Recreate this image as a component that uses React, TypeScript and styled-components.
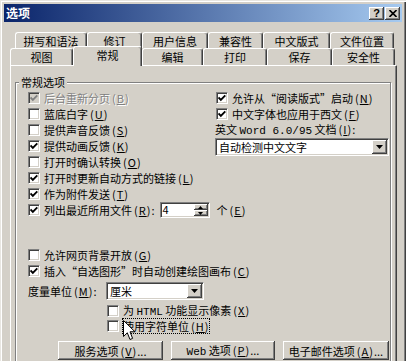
import React from 'react';
import styled, { createGlobalStyle, css } from 'styled-components';

const GlobalStyle = createGlobalStyle`
  html, body {
    margin: 0;
    padding: 0;
    background: #d4d0c8;
  }
  body {
    font-family: "Noto Sans CJK SC", "Liberation Sans", sans-serif;
    font-size: 11px;
    color: #000;
  }
`;

const raised = css`
  background: #d4d0c8;
  box-shadow: inset -1px -1px #404040, inset 1px 1px #fff, inset -2px -2px #808080;
`;

const sunken = css`
  border-top: 1px solid #808080;
  border-left: 1px solid #808080;
  border-right: 1px solid #fff;
  border-bottom: 1px solid #fff;
  box-shadow: inset 1px 1px #404040, inset -1px -1px #d4d0c8;
`;

const Window = styled.div`
  width: 406px;
  height: 361px;
  box-sizing: border-box;
  overflow: hidden;
  background: #d4d0c8;
  padding: 4px 4px 0;
  box-shadow: inset 1px 1px #e8e6e1, inset 2px 2px #fff, inset -1px 0 #404040, inset -2px 0 #808080;
`;

const TitleBar = styled.div`
  height: 18px;
  display: flex;
  align-items: center;
  justify-content: space-between;
  padding-left: 2px;
  background: linear-gradient(to right, #0a246a, #a6caf0);
`;

const TitleText = styled.span`
  color: #fff;
  font-weight: bold;
  font-size: 12px;
  line-height: 18px;
`;

const TitleButtons = styled.div`
  display: flex;
  gap: 1px;
  margin-right: 2px;
`;

const TitleButton = styled.div`
  ${raised};
  width: 15px;
  height: 13px;
  display: flex;
  align-items: center;
  justify-content: center;
  font-family: "Liberation Sans", sans-serif;
  font-weight: bold;
  font-size: 11px;
  line-height: 13px;
`;

const Body = styled.div`
  padding: 10px 5px 0 6px;
`;

const TabRow = styled.div<{ $indent?: number; $h: number }>`
  display: flex;
  height: ${(p) => p.$h}px;
  padding-left: ${(p) => p.$indent ?? 0}px;
`;

const Tab = styled.div<{ $w: number; $active?: boolean }>`
  box-sizing: border-box;
  width: ${(p) => p.$w}px;
  height: 100%;
  flex: none;
  display: flex;
  align-items: center;
  justify-content: center;
  background: #d4d0c8;
  border-top: 1px solid #fff;
  border-left: 1px solid #fff;
  border-right: 1px solid #404040;
  box-shadow: inset -1px 0 #808080;
  border-radius: 3px 3px 0 0;
  line-height: 14px;
  white-space: nowrap;
  ${(p) =>
    p.$active &&
    css`
      position: relative;
      z-index: 1;
      height: 20px;
      margin-top: -2px;
      padding-bottom: 3px;
    `}
`;

const Panel = styled.div`
  height: 330px;
  border-top: 1px solid #fff;
  border-left: 1px solid #fff;
  border-right: 1px solid #404040;
  box-shadow: inset -1px 0 #808080;
  padding: 8px 5px 0 4px;
`;

const Group = styled.fieldset`
  margin: 0;
  padding: 0 1px 0 12px;
  border: 1px solid #808080;
  box-shadow: inset 1px 1px #fff, 1px 1px #fff;
  min-height: 320px;
`;

const GroupLabel = styled.legend`
  padding: 0 2px;
  margin-left: -9px;
  line-height: 16px;
  background: #d4d0c8;
`;

const TopSection = styled.div`
  display: flex;
`;

const LeftCol = styled.div`
  width: 187px;
  flex: none;
`;

const RightCol = styled.div`
  flex: 1;
  min-width: 0;
`;

const BottomSection = styled.div`
  margin-top: 29px;
`;

const Row = styled.div<{ $h?: number; $indent?: number; $top?: number }>`
  position: relative;
  display: flex;
  align-items: center;
  height: ${(p) => p.$h ?? 16}px;
  margin-top: ${(p) => p.$top ?? 0}px;
  padding-left: ${(p) => p.$indent ?? 0}px;
  white-space: nowrap;
  line-height: 14px;
`;

const Box = styled.span<{ $disabled?: boolean }>`
  box-sizing: border-box;
  width: 12px;
  height: 12px;
  flex: none;
  margin-right: 4px;
  display: flex;
  align-items: center;
  justify-content: center;
  background: ${(p) => (p.$disabled ? '#d4d0c8' : '#fff')};
  ${sunken};
`;

const Label = styled.span<{ $disabled?: boolean; $focused?: boolean }>`
  flex: none;
  ${(p) =>
    p.$disabled &&
    css`
      color: #808080;
      text-shadow: 1px 1px #fff;
    `}
  ${(p) =>
    p.$focused &&
    css`
      outline: 1px dotted #000;
      outline-offset: 0;
    `}
`;

const KeyHint = styled.span`
  padding-left: 2px;
  letter-spacing: 1px;
`;

const Mono = styled.span`
  font-family: "Liberation Mono", monospace;
  font-size: 11px;
`;

const SpinBox = styled.div`
  box-sizing: border-box;
  display: flex;
  flex: none;
  width: 50px;
  height: 16px;
  margin: 0 7px 0 5px;
  background: #fff;
  ${sunken};
`;

const SpinField = styled.span`
  flex: 1;
  padding-left: 2px;
  line-height: 13px;
`;

const SpinButtons = styled.div`
  display: flex;
  flex-direction: column;
  width: 14px;
  padding: 1px 1px 1px 0;
`;

const SpinButton = styled.div`
  ${raised};
  flex: 1;
  display: flex;
  align-items: center;
  justify-content: center;
`;

const Combo = styled.div<{ $w?: number }>`
  box-sizing: border-box;
  display: flex;
  align-items: center;
  flex: none;
  width: ${(p) => (p.$w ? `${p.$w}px` : '100%')};
  height: 18px;
  background: #fff;
  ${sunken};
`;

const ComboText = styled.span`
  flex: 1;
  padding-left: 3px;
  line-height: 14px;
`;

const ComboButton = styled.span`
  ${raised};
  width: 15px;
  height: 14px;
  margin-right: 1px;
  display: flex;
  align-items: center;
  justify-content: center;
`;

const FieldLabel = styled.span`
  width: 78px;
  flex: none;
`;

const ButtonRow = styled.div`
  display: flex;
  justify-content: flex-end;
  gap: 8px;
  margin-top: 8px;
`;

const PushButton = styled.button<{ $w: number }>`
  ${raised};
  width: ${(p) => p.$w}px;
  height: 19px;
  border: none;
  padding: 0;
  font: inherit;
  color: #000;
  line-height: 14px;
  white-space: nowrap;
`;

const Pointer = styled.svg`
  position: absolute;
  left: 95px;
  top: 2px;
  z-index: 2;
`;

const Tick = ({ color = '#000' }: { color?: string }) => (
  <svg width="8" height="8" viewBox="0 0 8 8">
    <path d="M0.5 3.5 L2.8 5.8 L7.3 1.3" fill="none" stroke={color} strokeWidth="1.9" />
  </svg>
);

const Arrow = () => (
  <svg width="7" height="4" viewBox="0 0 7 4">
    <path d="M0 0 L7 0 L3.5 4 Z" fill="#000" />
  </svg>
);

const SmallArrow = ({ up }: { up?: boolean }) => (
  <svg width="5" height="3" viewBox="0 0 5 3">
    <path d={up ? 'M0 3 L2.5 0 L5 3 Z' : 'M0 0 L5 0 L2.5 3 Z'} fill="#000" />
  </svg>
);

const CheckBox: React.FC<{ checked?: boolean; disabled?: boolean }> = ({ checked, disabled }) => (
  <Box $disabled={disabled}>{checked && <Tick color={disabled ? '#808080' : '#000'} />}</Box>
);

const Key: React.FC<{ k: string }> = ({ k }) => (
  <KeyHint>
    (<u>{k}</u>)
  </KeyHint>
);

const topTabs = [
  { name: '拼写和语法', w: 72 },
  { name: '修订', w: 55 },
  { name: '用户信息', w: 66 },
  { name: '兼容性', w: 55 },
  { name: '中文版式', w: 67 },
  { name: '文件位置', w: 64 },
];

const frontTabs = [
  { name: '视图', w: 63 },
  { name: '常规', w: 69, active: true },
  { name: '编辑', w: 61 },
  { name: '打印', w: 64 },
  { name: '保存', w: 65 },
  { name: '安全性', w: 63 },
];

const leftOptions = [
  { text: '后台重新分页', key: 'B', checked: true, disabled: true },
  { text: '蓝底白字', key: 'U' },
  { text: '提供声音反馈', key: 'S' },
  { text: '提供动画反馈', key: 'K', checked: true },
  { text: '打开时确认转换', key: 'O' },
  { text: '打开时更新自动方式的链接', key: 'L', checked: true },
  { text: '作为附件发送', key: 'T', checked: true },
];

const App: React.FC = () => (
  <>
    <GlobalStyle />
    <Window>
      <TitleBar>
        <TitleText>选项</TitleText>
        <TitleButtons>
          <TitleButton>?</TitleButton>
          <TitleButton>
            <svg width="8" height="7" viewBox="0 0 8 7">
              <path d="M0.5 0 L7.5 7 M7.5 0 L0.5 7" stroke="#000" strokeWidth="1.6" />
            </svg>
          </TitleButton>
        </TitleButtons>
      </TitleBar>

      <Body>
        <TabRow $indent={5} $h={16}>
          {topTabs.map((t) => (
            <Tab key={t.name} $w={t.w}>
              {t.name}
            </Tab>
          ))}
        </TabRow>
        <TabRow $h={17}>
          {frontTabs.map((t) => (
            <Tab key={t.name} $w={t.w} $active={t.active}>
              {t.name}
            </Tab>
          ))}
        </TabRow>

        <Panel>
          <Group>
            <GroupLabel>常规选项</GroupLabel>
            <TopSection>
              <LeftCol>
                {leftOptions.map((o) => (
                  <Row key={o.key}>
                    <CheckBox checked={o.checked} disabled={o.disabled} />
                    <Label $disabled={o.disabled}>
                      {o.text}
                      <Key k={o.key} />
                    </Label>
                  </Row>
                ))}
                <Row>
                  <CheckBox checked />
                  <Label>
                    列出最近所用文件<Key k="R" />:
                  </Label>
                  <SpinBox>
                    <SpinField>4</SpinField>
                    <SpinButtons>
                      <SpinButton>
                        <SmallArrow up />
                      </SpinButton>
                      <SpinButton>
                        <SmallArrow />
                      </SpinButton>
                    </SpinButtons>
                  </SpinBox>
                  <Label>
                    个<Key k="E" />
                  </Label>
                </Row>
              </LeftCol>

              <RightCol>
                <Row $indent={1}>
                  <CheckBox checked />
                  <Label>
                    允许从“阅读版式”启动<Key k="N" />
                  </Label>
                </Row>
                <Row $indent={1}>
                  <CheckBox checked />
                  <Label>
                    中文字体也应用于西文<Key k="F" />
                  </Label>
                </Row>
                <Row>
                  <Label>
                    英文 <Mono>Word 6.0/95</Mono> 文档<Key k="I" />:
                  </Label>
                </Row>
                <Combo>
                  <ComboText>自动检测中文文字</ComboText>
                  <ComboButton>
                    <Arrow />
                  </ComboButton>
                </Combo>
              </RightCol>
            </TopSection>

            <BottomSection>
              <Row>
                <CheckBox />
                <Label>
                  允许网页背景开放<Key k="G" />
                </Label>
              </Row>
              <Row>
                <CheckBox checked />
                <Label>
                  插入“自选图形”时自动创建绘图画布<Key k="C" />
                </Label>
              </Row>
              <Row $h={18} $top={3}>
                <FieldLabel>
                  度量单位<Key k="M" />:
                </FieldLabel>
                <Combo $w={98}>
                  <ComboText>厘米</ComboText>
                  <ComboButton>
                    <Arrow />
                  </ComboButton>
                </Combo>
              </Row>
              <Row $h={15} $top={3} $indent={79}>
                <CheckBox />
                <Label>
                  为 <Mono>HTML</Mono> 功能显示像素<Key k="X" />
                </Label>
              </Row>
              <Row $h={15} $indent={79}>
                <CheckBox />
                <Label $focused>
                  使用字符单位<Key k="H" />
                </Label>
                <Pointer width="13" height="21" viewBox="0 0 13 21">
                  <path
                    d="M0.5 0.5 L0.5 16.5 L4.3 12.8 L7 19.5 L9.6 18.4 L7 11.8 L12 11.8 Z"
                    fill="#fff"
                    stroke="#000"
                    strokeWidth="1"
                  />
                </Pointer>
              </Row>
              <ButtonRow>
                <PushButton $w={105}>
                  服务选项<Key k="V" />...
                </PushButton>
                <PushButton $w={104}>
                  <Mono>Web</Mono> 选项<Key k="P" />...
                </PushButton>
                <PushButton $w={106}>
                  电子邮件选项<Key k="A" />...
                </PushButton>
              </ButtonRow>
            </BottomSection>
          </Group>
        </Panel>
      </Body>
    </Window>
  </>
);

export default App;
